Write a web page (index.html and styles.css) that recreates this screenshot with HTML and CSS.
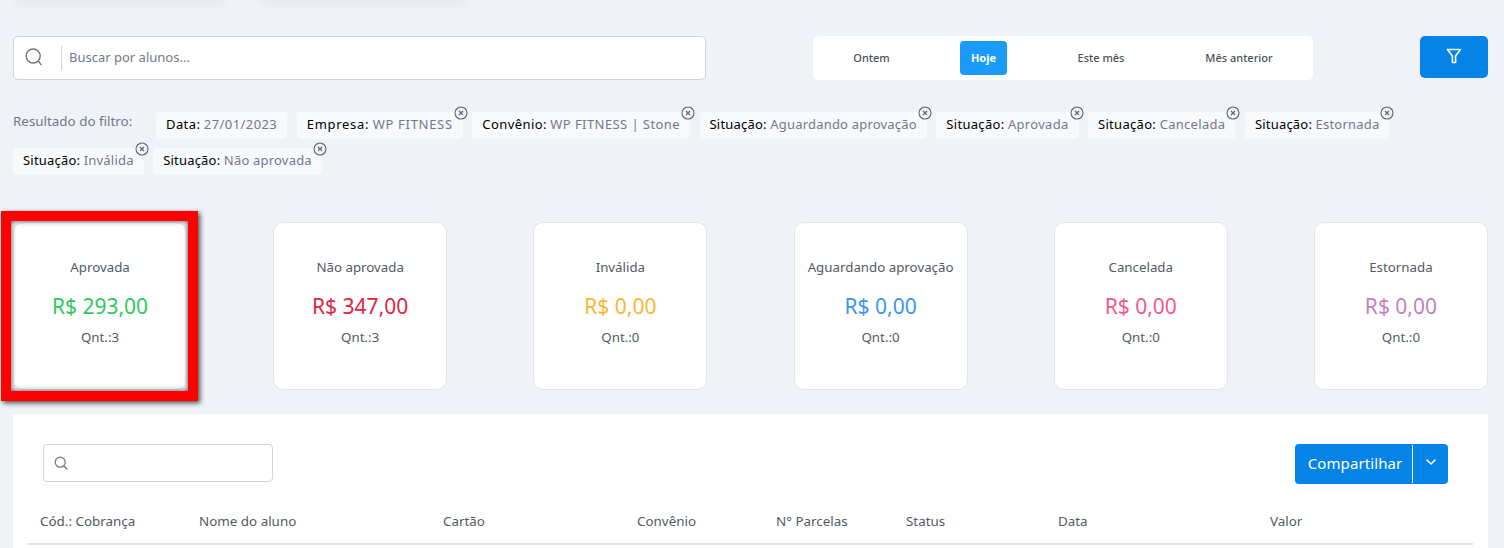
FILE: index.html
```html
<!DOCTYPE html>
<html lang="pt-BR">
<head>
<meta charset="utf-8">
<title>Cobranças</title>
<link rel="stylesheet" href="styles.css">
</head>
<body>
<div class="top-remnants"><span class="remnant r1"></span><span class="remnant r2"></span></div>
<div class="toolbar">
  <div class="search">
    <svg class="search-icon" width="18" height="18" viewBox="0 0 18 18" fill="none" stroke="#6c757d" stroke-width="1.4"><circle cx="8.2" cy="8" r="7"/><path d="M13.2 13l3 3.6" stroke-linecap="round"/></svg>
    <span class="search-sep"></span>
    <span class="search-ph">Buscar por alunos...</span>
  </div>
  <div class="segments">
    <span class="seg seg1">Ontem</span>
    <span class="seg seg2 active">Hoje</span>
    <span class="seg seg3">Este mês</span>
    <span class="seg seg4">Mês anterior</span>
  </div>
  <button class="filter-btn"><svg width="16" height="16" viewBox="0 0 16 16" fill="none" stroke="#fff" stroke-width="1.6" stroke-linejoin="round"><path d="M1.5 1.5h13L9.6 8v6.5H6.4V8z"/></svg></button>
</div>
<div class="filters">
  <span class="filters-label">Resultado do filtro:</span>
  <span class="chip chip-b"><b>Data:</b> 27/01/2023</span>
  <span class="chip chip-c"><b>Empresa:</b> WP FITNESS<svg class="x" viewBox="0 0 14 14"><circle cx="7" cy="7" r="6"/><path d="M5 5l4 4M9 5l-4 4"/></svg></span>
  <span class="chip chip-b"><b>Convênio:</b> WP FITNESS | Stone<svg class="x" viewBox="0 0 14 14"><circle cx="7" cy="7" r="6"/><path d="M5 5l4 4M9 5l-4 4"/></svg></span>
  <span class="chip"><b>Situação:</b> Aguardando aprovação<svg class="x" viewBox="0 0 14 14"><circle cx="7" cy="7" r="6"/><path d="M5 5l4 4M9 5l-4 4"/></svg></span>
  <span class="chip chip-a"><b>Situação:</b> Aprovada<svg class="x" viewBox="0 0 14 14"><circle cx="7" cy="7" r="6"/><path d="M5 5l4 4M9 5l-4 4"/></svg></span>
  <span class="chip chip-a"><b>Situação:</b> Cancelada<svg class="x" viewBox="0 0 14 14"><circle cx="7" cy="7" r="6"/><path d="M5 5l4 4M9 5l-4 4"/></svg></span>
  <span class="chip"><b>Situação:</b> Estornada<svg class="x" viewBox="0 0 14 14"><circle cx="7" cy="7" r="6"/><path d="M5 5l4 4M9 5l-4 4"/></svg></span>
  <span class="chip"><b>Situação:</b> Inválida<svg class="x" viewBox="0 0 14 14"><circle cx="7" cy="7" r="6"/><path d="M5 5l4 4M9 5l-4 4"/></svg></span>
  <span class="chip"><b>Situação:</b> Não aprovada<svg class="x" viewBox="0 0 14 14"><circle cx="7" cy="7" r="6"/><path d="M5 5l4 4M9 5l-4 4"/></svg></span>
</div>
<div class="cards">
  <div class="card highlighted"><div class="card-title">Aprovada</div><div class="card-value green">R$ 293,00</div><div class="card-qty">Qnt.:3</div></div>
  <div class="card"><div class="card-title">Não aprovada</div><div class="card-value red">R$ 347,00</div><div class="card-qty">Qnt.:3</div></div>
  <div class="card"><div class="card-title">Inválida</div><div class="card-value yellow">R$ 0,00</div><div class="card-qty">Qnt.:0</div></div>
  <div class="card"><div class="card-title">Aguardando aprovação</div><div class="card-value blue">R$ 0,00</div><div class="card-qty">Qnt.:0</div></div>
  <div class="card"><div class="card-title">Cancelada</div><div class="card-value pink">R$ 0,00</div><div class="card-qty">Qnt.:0</div></div>
  <div class="card"><div class="card-title">Estornada</div><div class="card-value purple">R$ 0,00</div><div class="card-qty">Qnt.:0</div></div>
</div>
<div class="panel">
  <div class="panel-top">
    <div class="mini-search"><svg width="14" height="14" viewBox="0 0 14 14" fill="none" stroke="#6c757d" stroke-width="1.2"><circle cx="6.2" cy="6.2" r="5"/><path d="M10 10l3 3" stroke-linecap="round"/></svg></div>
    <div class="share"><span class="share-label">Compartilhar</span><span class="share-caret"><svg width="10" height="6" viewBox="0 0 10 6" fill="none" stroke="#fff" stroke-width="1.6" stroke-linecap="round" stroke-linejoin="round"><path d="M1 1l4 4 4-4"/></svg></span></div>
  </div>
  <div class="thead">
    <span>Cód.: Cobrança</span><span>Nome do aluno</span><span>Cartão</span><span>Convênio</span><span>N° Parcelas</span><span>Status</span><span>Data</span><span>Valor</span>
  </div>
</div>
</body>
</html>
```
FILE: styles.css
```css
* { box-sizing: border-box; }
html, body { height: 100%; }
body {
  margin: 0;
  height: 548px;
  overflow: hidden;
  background: #eff2f7;
  font-family: "Noto Sans", sans-serif;
  color: #525a66;
  font-size: 13px;
}
.top-remnants { height: 0; display: flex; padding-left: 18px; gap: 40px; }
.remnant { height: 0; display: block; box-shadow: 0 0 9px 3px rgba(0,0,0,.06); }
.r1 { width: 204px; }
.r2 { width: 201px; }
.toolbar { display: flex; align-items: flex-start; padding: 36px 16px 0 13px; height: 98px; }
.search {
  width: 693px; height: 44px; background: #fff; border: 1px solid #ced4da; border-radius: 5px;
  display: flex; align-items: center; padding-left: 11px;
}
.search-icon { margin-bottom: 2px; }
.search-sep { width: 1px; height: 24px; background: #ced4da; margin-left: 18px; margin-right: 7px; }
.search-ph { color: #74788d; font-size: 13px; padding-bottom: 2px; }
.segments {
  width: 500px; height: 44px; margin-left: 107px; background: #fff; border-radius: 5px;
  display: flex; align-items: center; font-size: 11px; font-weight: 500;
}
.seg { height: 34px; display: flex; align-items: center; justify-content: center; border-radius: 4px; color: #495057; padding-bottom: 2px; }
.seg1 { width: 117px; }
.seg2 { width: 47px; margin-left: 30px; }
.seg3 { width: 94px; margin-left: 47px; }
.seg4 { width: 130px; margin-left: 26px; }
.active { background: #1a9bfc; color: #fff; font-weight: 700; }
.filter-btn {
  width: 68px; height: 42px; margin-left: 107px; border: 0; border-radius: 5px; background: #0583e6;
  display: flex; align-items: center; justify-content: center; padding: 0 0 3px;
}
.filters {
  display: flex; flex-wrap: wrap; align-items: flex-start; gap: 9px 9.5px; padding: 14px 100px 0 13px; height: 124px; align-content: flex-start;
}
.filters-label { color: #74788d; font-size: 13.4px; width: 133.5px; line-height: 18px; }
.chip {
  position: relative; height: 27px; display: inline-flex; align-items: center; gap: 3.5px; padding: 0 10px 4px;
  background: #f8f9fa; border-radius: 4px; color: #74788d; font-size: 13px; letter-spacing: .2px; white-space: nowrap;
}
.chip-a { letter-spacing: .3px; }
.chip-b { letter-spacing: .42px; }
.chip-c { letter-spacing: .7px; }
.chip b { font-weight: 400; color: #000; }
.x { position: absolute; width: 14px; height: 14px; right: -5px; top: -6px; fill: none; stroke: #5c6670; stroke-width: 1.1; }
.cards { display: flex; justify-content: space-between; padding: 0 16px 0 13px; height: 192px; }
.card {
  position: relative; width: 174px; height: 168px; background: #fff; border: 1px solid #e2e5ea; border-radius: 10px;
  display: flex; flex-direction: column; align-items: center; padding-top: 35px; text-align: center;
}
.highlighted::after {
  content: ""; box-sizing: border-box; position: absolute; left: -13px; top: -12px; width: 197px; height: 190px;
  border: 10.5px solid #ff0000; box-shadow: 2px 2px 5px rgba(0,0,0,.7), inset 0 0 5px rgba(0,0,0,.7);
}
.card-title { font-size: 13.3px; line-height: 18px; }
.card-value { font-size: 21px; line-height: 28px; margin-top: 16px; }
.card-qty { font-size: 13.3px; line-height: 18px; margin-top: 8px; }
.green { color: #2fc95e; }
.red { color: #e0263f; }
.yellow { color: #f7b733; }
.blue { color: #3a96f5; }
.pink { color: #f4588a; }
.purple { color: #c77fbd; }
.panel { margin: 0 16px 0 13px; height: 134px; background: #fff; padding: 30px 15px 0; }
.panel-top { display: flex; justify-content: space-between; padding: 0 25px 0 15px; height: 40px; }
.mini-search {
  width: 230px; height: 38px; border: 1px solid #ced4da; border-radius: 4px; display: flex; align-items: center; padding-left: 10px;
}
.share { width: 153px; height: 40px; background: #0583e6; border-radius: 4px; display: flex; align-items: center; color: #fff; }
.share-label { width: 118px; height: 38px; border-right: 1px solid #fff; display: flex; align-items: center; justify-content: center; font-size: 15px; letter-spacing: .1px; padding: 0 0 3px 3px; }
.share-caret { flex: 1; display: flex; justify-content: center; padding-bottom: 4px; }
.thead {
  display: grid; grid-template-columns: 159px 244px 194px 139px 130px 152px 212px 1fr;
  padding: 0 0 12px 12px; margin-top: 27px; height: 34px; align-items: center; border-bottom: 2px solid #dee2e6; font-size: 13.4px; line-height: 20px;
}
```
